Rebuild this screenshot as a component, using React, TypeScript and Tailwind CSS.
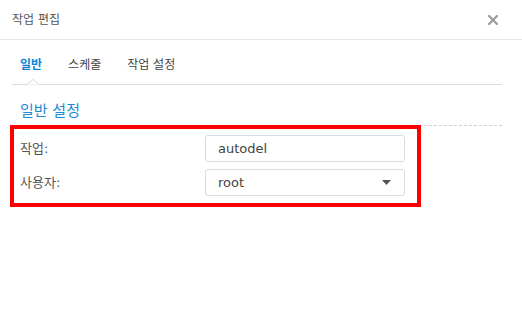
const KR = "font-['DejaVu_Sans','Noto_Sans_CJK_KR',sans-serif]";

function CloseIcon() {
  return (
    <svg width="10" height="10" viewBox="0 0 10 10" className="text-[#9a9a9a]">
      <path d="M1 1L9 9M9 1L1 9" stroke="currentColor" strokeWidth="2.2" strokeLinecap="square" />
    </svg>
  );
}

function Field({ label, children }: { label: string; children: React.ReactNode }) {
  return (
    <div className="flex items-center h-[27px]">
      <span className="w-[191px] pl-[6px] text-[13px] text-[#555]">{label}</span>
      {children}
    </div>
  );
}

export default function App() {
  const tabs = ["일반", "스케줄", "작업 설정"];

  return (
    <div className={`w-[522px] h-[317px] bg-white ${KR}`}>
      {/* header */}
      <div className="h-[40px] flex items-center justify-between pl-[12px] pr-[24px] border-b border-[#e6e6e6]">
        <span className="text-[12px] text-[#555]">작업 편집</span>
        <CloseIcon />
      </div>

      <div className="px-[12px] w-[514px]">
        {/* tabs */}
        <div className="relative h-[45px] flex items-end gap-[26px] pl-[8px] pb-[10px] border-b border-[#dcdcdc]">
          {tabs.map((t, i) => (
            <span
              key={t}
              className={`text-[12px] ${i === 0 ? "text-[#0a84d6] font-semibold" : "text-[#444]"}`}
            >
              {t}
            </span>
          ))}
          <svg
            width="12"
            height="6"
            viewBox="0 0 12 6"
            className="absolute left-[15px] bottom-[-1px]"
          >
            <path d="M0 5.5L6 0.5L12 5.5" fill="white" stroke="#dcdcdc" strokeWidth="1" />
          </svg>
        </div>

        {/* section title */}
        <div className="h-[41px] flex items-end pl-[8px] pb-[3px] border-b border-dashed border-[#d0d0d0]">
          <span className="text-[15px] text-[#1e8ad6]">일반 설정</span>
        </div>
      </div>

      {/* highlighted form */}
      <div className="relative -mt-[1px] ml-[10px] w-[411px] border-4 border-[#ff0000] pt-[6px] pb-[7px] pr-[12px] flex flex-col gap-[7px]">
        <Field label="작업:">
          <div className="w-[200px] h-[27px] flex items-center px-[12px] rounded-[3px] border border-[#d7dce2] text-[13px] text-[#444]">
            autodel
          </div>
        </Field>
        <Field label="사용자:">
          <div className="w-[200px] h-[27px] flex items-center justify-between px-[12px] rounded-[3px] border border-[#d7dce2] text-[13px] text-[#444]">
            <span>root</span>
            <svg width="9" height="5" viewBox="0 0 9 5" className="mr-[1px]">
              <path d="M0 0H9L4.5 5Z" fill="#555" />
            </svg>
          </div>
        </Field>
      </div>
    </div>
  );
}
